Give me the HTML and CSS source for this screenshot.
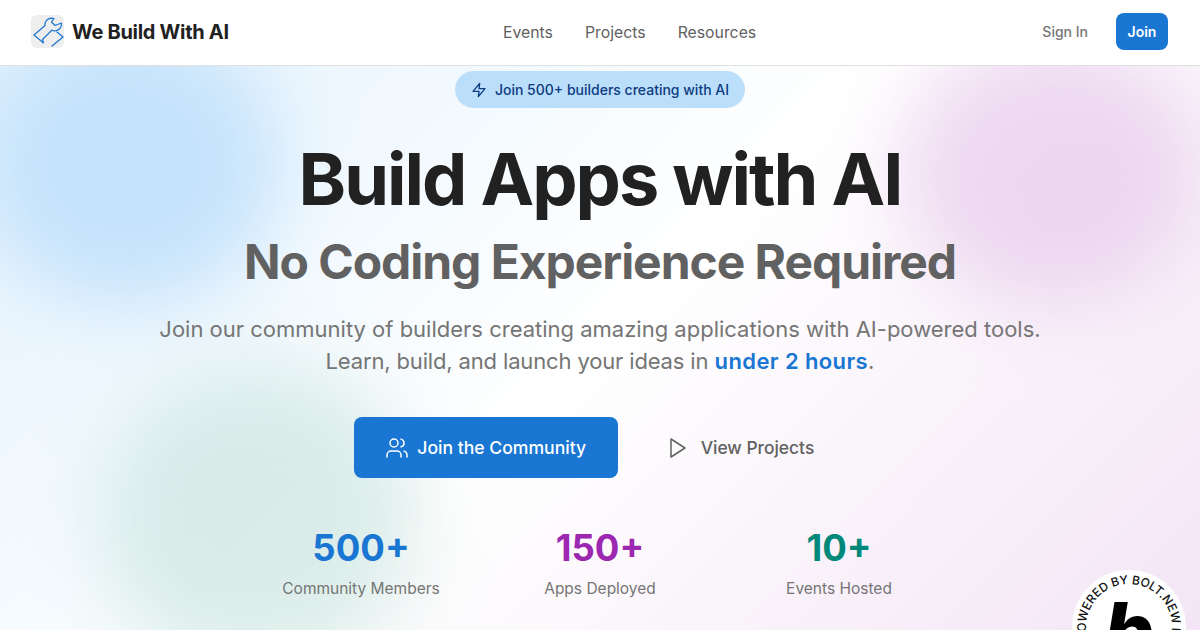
FILE: index.html
```html
<!DOCTYPE html>
<html lang="en">
<head>
<meta charset="utf-8">
<title>We Build With AI</title>
<link rel="stylesheet" href="styles.css">
</head>
<body>
<header class="nav">
  <a class="brand">
    <span class="logo">
      <svg viewBox="0 0 32 32" width="32" height="32" fill="none" stroke="#1976d2" stroke-width="1.2" stroke-linecap="round" stroke-linejoin="round">
        <path d="M2 19 13 9.500C12.500 6 15 2.500 19 2.200L22 2.500 19.500 6l3.500 3.500 6.500-2.500C30 11 27 15 22 15l-2-1-9.500 9.500 1 3.500z"/>
        <path d="M25 16l6 5-11 9"/>
      </svg>
    </span>
    <span class="brand-name">We Build With AI</span>
  </a>
  <nav class="links">
    <a>Events</a>
    <a>Projects</a>
    <a>Resources</a>
  </nav>
  <div class="actions">
    <a class="signin">Sign In</a>
    <a class="join">Join</a>
  </div>
</header>
<main class="hero">
  <div class="blob blob-blue"></div>
  <div class="blob blob-pink"></div>
  <div class="blob blob-green"></div>
  <div class="content">
    <div class="badge">
      <svg viewBox="0 0 24 24" width="16" height="16" fill="none" stroke="currentColor" stroke-width="2" stroke-linecap="round" stroke-linejoin="round"><path d="M13 2 3 14h9l-1 8 10-12h-9l1-8z"/></svg>
      <span>Join 500+ builders creating with AI</span>
    </div>
    <h1>Build Apps with AI</h1>
    <h2>No Coding Experience Required</h2>
    <p class="lead">Join our community of builders creating amazing applications with AI-powered tools.<br><span class="lead-tail">Learn, build, and launch your ideas in</span> <strong>under 2 hours</strong>.</p>
    <div class="cta">
      <a class="btn-primary">
        <svg viewBox="0 0 24 24" width="24" height="24" fill="none" stroke="currentColor" stroke-width="1.5" stroke-linecap="round" stroke-linejoin="round"><path d="M16 21v-2a4 4 0 0 0-4-4H6a4 4 0 0 0-4 4v2"/><circle cx="9" cy="7" r="4"/><path d="M22 21v-2a4 4 0 0 0-3-3.870"/><path d="M16 3.130a4 4 0 0 1 0 7.750"/></svg>
        <span>Join the Community</span>
      </a>
      <a class="btn-ghost">
        <svg viewBox="0 0 24 24" width="24" height="24" fill="none" stroke="currentColor" stroke-width="1.5" stroke-linecap="round" stroke-linejoin="round"><path d="M5 3l14 9-14 9V3z"/></svg>
        <span>View Projects</span>
      </a>
    </div>
    <div class="stats">
      <div class="stat"><div class="num num-blue">500+</div><div class="label">Community Members</div></div>
      <div class="stat"><div class="num num-purple">150+</div><div class="label">Apps Deployed</div></div>
      <div class="stat"><div class="num num-teal">10+</div><div class="label">Events Hosted</div></div>
    </div>
  </div>
  <div class="bolt">
    <svg viewBox="0 0 120 120" width="120" height="120">
      <circle cx="60" cy="60" r="57" fill="#fff"/>
      <defs><path id="ring" d="M60 103a43 43 0 1 1 0-86a43 43 0 1 1 0 86"/></defs>
      <text class="bolt-ring"><textPath href="#ring" startOffset="55">POWERED BY BOLT.NEW IN</textPath></text>
      <text class="bolt-b" x="60" y="92" text-anchor="middle">b</text>
    </svg>
  </div>
</main>
</body>
</html>
```
FILE: styles.css
```css
* { box-sizing: border-box; }
html, body { margin: 0; height: 630px; overflow: hidden; }
body { font-family: Inter, "Liberation Sans", sans-serif; color: #212121; background: #fff; }
.nav { height: 66px; display: flex; align-items: center; justify-content: space-between; padding: 0 32px 2px 31px; background: #fff; border-bottom: 1px solid #e0e0e0; position: relative; }
.brand { display: flex; align-items: center; gap: 8px; }
.logo { width: 33px; height: 33px; background: #eeeeee; border-radius: 6px; display: flex; align-items: center; justify-content: center; }
.brand-name { font-size: 20px; font-weight: 700; letter-spacing: -0.3px; }
.links { position: absolute; left: 503px; top: 23px; display: flex; gap: 32px; font-size: 15.8px; line-height: 20px; color: #616161; }
.actions { display: flex; align-items: center; gap: 28px; }
.signin { font-size: 14px; font-weight: 500; color: #757575; }
.join { width: 52px; height: 37px; display: flex; align-items: center; justify-content: center; border-radius: 8px; background: #1976d2; color: #fff; font-size: 14px; font-weight: 600; }
.hero { position: relative; height: 564px; overflow: hidden; background: linear-gradient(135deg, #e3f2fd 0%, #ffffff 50%, #f3e5f5 100%); }
.blob { position: absolute; border-radius: 50%; filter: blur(40px); }
.blob-blue { left: -20px; top: -40px; width: 300px; height: 280px; background: #bbdefb; opacity: .8; }
.blob-pink { left: 900px; top: -30px; width: 300px; height: 270px; background: #e1bee7; opacity: .55; }
.blob-green { left: 100px; top: 300px; width: 320px; height: 310px; background: #b2d8d0; opacity: .45; }
.content { position: relative; display: flex; flex-direction: column; align-items: center; }
.badge { margin-top: 5px; height: 37px; width: 290px; border-radius: 19px; background: #bbdefb; color: #0d3c80; display: flex; align-items: center; justify-content: center; gap: 8px; font-size: 14px; font-weight: 500; }
h1 { margin: 31px 0 0; font-size: 72px; line-height: 80px; font-weight: 700; letter-spacing: -2px; color: #212121; }
h2 { margin: 13px 0 0; font-size: 48px; line-height: 60px; font-weight: 700; letter-spacing: -1.05px; color: #616161; }
.lead { margin: 21px 0 0; font-size: 22px; line-height: 32px; color: #757575; text-align: center; }
.lead-tail { letter-spacing: -0.15px; }
.lead strong { font-weight: 600; letter-spacing: 0.4px; color: #1976d2; }
.cta { margin-top: 40px; display: flex; align-items: center; gap: 16px; }
.btn-primary { width: 264px; height: 61px; border-radius: 8px; background: #1976d2; color: #fff; display: flex; align-items: center; justify-content: center; gap: 8px; font-size: 17.6px; font-weight: 500; }
.btn-ghost { height: 61px; padding: 0 32px; display: flex; align-items: center; gap: 11px; font-size: 17.4px; font-weight: 500; color: #616161; }
.stats { margin-top: 46px; display: flex; justify-content: center; }
.stat { width: 239px; text-align: center; }
.num { font-size: 36.5px; line-height: 48px; font-weight: 700; }
.num-blue { color: #1976d2; }
.num-purple { color: #9c27b0; }
.num-teal { color: #00897b; }
.label { font-size: 15.5px; line-height: 24px; color: #757575; margin-top: 5px; }
.bolt { position: absolute; left: 1069px; top: 501px; width: 120px; height: 120px; }
.bolt-ring { font-size: 12px; font-weight: 500; fill: #111; }
.bolt-b { font-size: 78px; font-weight: 800; font-style: italic; fill: #000; }
```
